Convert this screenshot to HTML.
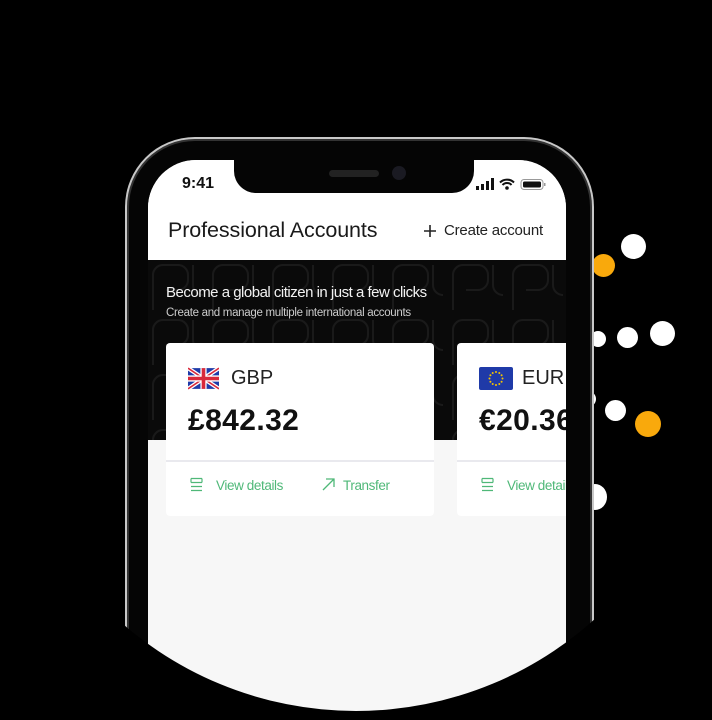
<!DOCTYPE html>
<html><head><meta charset="utf-8"><style>
html,body{margin:0;padding:0;background:#000;width:712px;height:711px;overflow:hidden;font-family:"Liberation Sans",sans-serif}
.wrap{position:absolute;left:0;top:0;width:712px;height:711px;clip-path:circle(356px at 356px 355px);background:#000}
.dot{position:absolute;border-radius:50%;background:#fff}
.or{background:#f9a90c}
.frame{position:absolute;left:125px;top:137px;width:465px;height:560px;border-radius:70px 70px 0 0;border:2px solid #c8c8c8;border-bottom:none;background:#050505;box-shadow:inset 0 0 0 2px #333}
.screen{position:absolute;left:148px;top:160px;width:418px;height:560px;border-radius:48px 48px 0 0;background:#f7f7f7;overflow:hidden}
.notch{position:absolute;left:86px;top:0;width:240px;height:33px;background:#050505;border-radius:0 0 22px 22px}
.hdr{position:absolute;left:0;top:0;width:418px;height:100px;background:#fff}
.dark{position:absolute;left:0;top:100px;width:418px;height:180px;background:#0a0a0a}
.card{position:absolute;top:183px;width:268px;height:173px;background:#fff;border-radius:4px}
.card .div{position:absolute;left:0;right:0;top:117px;height:2px;background:#e9e9ee}
.cur{position:absolute;left:65px;top:24px;font-size:20px;color:#222}
.amt{position:absolute;left:22px;top:61px;font-size:30px;font-weight:bold;color:#111;letter-spacing:0.4px}
.act{position:absolute;top:135px;font-size:13.5px;color:#4fb878;letter-spacing:-0.4px}
</style></head><body><div class="wrap">
<div class="dot" style="left:621px;top:234px;width:25px;height:25px"></div>
<div class="dot or" style="left:592px;top:254px;width:23px;height:23px"></div>
<div class="dot" style="left:590px;top:331px;width:16px;height:16px"></div>
<div class="dot" style="left:617px;top:327px;width:21px;height:21px"></div>
<div class="dot" style="left:650px;top:321px;width:25px;height:25px"></div>
<div class="dot" style="left:580px;top:391px;width:16px;height:16px"></div>
<div class="dot" style="left:605px;top:400px;width:21px;height:21px"></div>
<div class="dot or" style="left:635px;top:411px;width:26px;height:26px"></div>
<div class="dot" style="left:583px;top:484px;width:24px;height:26px"></div>
<div class="frame"></div>
<div class="screen">
 <div class="hdr">
  <div style="position:absolute;left:34px;top:15px;font-size:16px;font-weight:bold;color:#111">9:41</div>
  <svg style="position:absolute;left:326px;top:17px" width="76" height="14" viewBox="0 0 76 14">
   <rect x="2" y="9" width="3" height="4" fill="#111"/><rect x="7" y="7" width="3" height="6" fill="#111"/><rect x="12" y="4" width="3" height="9" fill="#111"/><rect x="17" y="1" width="3" height="12" fill="#111"/>
   <path d="M26 5.5a10 10 0 0 1 14 0M28.5 8a6 6 0 0 1 9 0" stroke="#111" stroke-width="2" fill="none"/><circle cx="33" cy="11" r="1.8" fill="#111"/>
   <rect x="47" y="2.5" width="22" height="10" rx="3" fill="none" stroke="#999" stroke-width="1"/><rect x="49" y="4.5" width="18" height="6" rx="1.5" fill="#111"/><rect x="70" y="6" width="1.5" height="3" fill="#999"/>
  </svg>
  <div style="position:absolute;left:20px;top:58px;font-size:21.5px;color:#1a1a1a;letter-spacing:-0.1px">Professional Accounts</div>
  <svg style="position:absolute;left:275px;top:64px" width="14" height="14"><path d="M7 1v12M1 7h12" stroke="#222" stroke-width="1.6"/></svg>
  <div style="position:absolute;left:296px;top:62px;font-size:15px;color:#222;letter-spacing:-0.2px">Create account</div>
 </div>
 <div class="notch"><div style="position:absolute;left:95px;top:10px;width:50px;height:7px;border-radius:4px;background:#222"></div><div style="position:absolute;left:158px;top:6px;width:14px;height:14px;border-radius:50%;background:#1a1a22"></div></div>
 <div class="dark">
  <svg width="418" height="180" style="position:absolute;left:0;top:0"><defs><pattern id="p" width="60" height="55" patternUnits="userSpaceOnUse"><path d="M5 50V15a10 10 0 0 1 10-10h15a10 10 0 0 1 10 10v5a10 10 0 0 1-10 10H18M45 5v20a10 10 0 0 0 10 10" stroke="#1a1a1a" stroke-width="2" fill="none"/></pattern></defs><rect width="418" height="180" fill="url(#p)"/></svg>
  <div style="position:absolute;left:18px;top:24px;font-size:15px;color:#f2f2f2;letter-spacing:-0.5px">Become a global citizen in just a few clicks</div>
  <div style="position:absolute;left:18px;top:47px;font-size:11.5px;color:#ccc;letter-spacing:-0.3px">Create and manage multiple international accounts</div>
 </div>
 <div class="card" style="left:18px">
  <svg style="position:absolute;left:22px;top:24px" width="31" height="23" viewBox="0 0 60 40"><rect width="60" height="40" rx="3" fill="#1f3aa8"/><path d="M0 0L60 40M60 0L0 40" stroke="#fff" stroke-width="8"/><path d="M0 0L60 40M60 0L0 40" stroke="#d8283a" stroke-width="3"/><path d="M30 0V40M0 20H60" stroke="#fff" stroke-width="12"/><path d="M30 0V40M0 20H60" stroke="#d8283a" stroke-width="7"/></svg>
  <div class="cur">GBP</div>
  <div class="amt">£842.32</div>
  <div class="div"></div>
  <svg style="position:absolute;left:24px;top:134px" width="13" height="15"><path d="M1 1.5h11M1 5.5h11M1 9.5h11M1 13.5h11M1 1.5v4M12 1.5v4" stroke="#4fb878" stroke-width="1.2" fill="none"/></svg>
  <div class="act" style="left:50px">View details</div>
  <svg style="position:absolute;left:156px;top:135px" width="13" height="13"><path d="M1 12L12 1M4 1h8v8" stroke="#4fb878" stroke-width="1.3" fill="none"/></svg>
  <div class="act" style="left:177px">Transfer</div>
 </div>
 <div class="card" style="left:309px">
  <svg style="position:absolute;left:22px;top:24px" width="34" height="23" viewBox="0 0 34 23"><rect width="34" height="23" rx="2" fill="#1f3aa8"/><g fill="#f5c400"><circle cx="17" cy="5" r="1"/><circle cx="17" cy="18" r="1"/><circle cx="10.5" cy="11.5" r="1"/><circle cx="23.5" cy="11.5" r="1"/><circle cx="13.7" cy="6" r="1"/><circle cx="20.3" cy="6" r="1"/><circle cx="13.7" cy="17" r="1"/><circle cx="20.3" cy="17" r="1"/><circle cx="11.4" cy="8.3" r="1"/><circle cx="22.6" cy="8.3" r="1"/><circle cx="11.4" cy="14.7" r="1"/><circle cx="22.6" cy="14.7" r="1"/></g></svg>
  <div class="cur">EUR</div>
  <div class="amt">€20.36</div>
  <div class="div"></div>
  <svg style="position:absolute;left:24px;top:134px" width="13" height="15"><path d="M1 1.5h11M1 5.5h11M1 9.5h11M1 13.5h11M1 1.5v4M12 1.5v4" stroke="#4fb878" stroke-width="1.2" fill="none"/></svg>
  <div class="act" style="left:50px">View details</div>
 </div>
</div>
</div></body></html>
